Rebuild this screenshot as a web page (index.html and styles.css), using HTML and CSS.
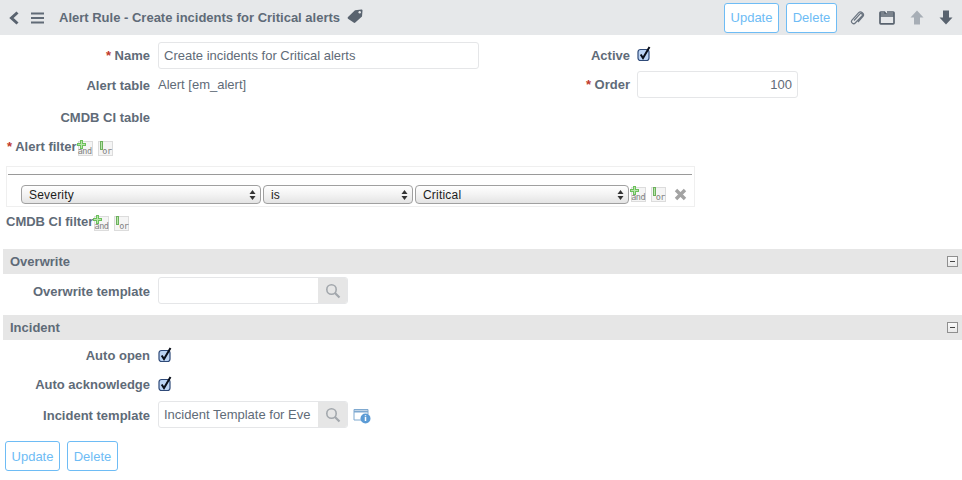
FILE: index.html
```html
<!DOCTYPE html>
<html lang="en">
<head>
<meta charset="utf-8">
<title>Alert Rule</title>
<link rel="stylesheet" href="styles.css">
</head>
<body>
<header class="topbar">
  <svg class="ic-back" width="12" height="14" viewBox="0 0 12 14"><path d="M9.500 1.500 3.500 7l6 5.500" fill="none" stroke="#59636f" stroke-width="3"/></svg>
  <svg class="ic-menu" width="14" height="12" viewBox="0 0 14 12"><path d="M0 1.500h13M0 6h13M0 10.500h13" stroke="#616b77" stroke-width="2"/></svg>
  <h1 class="title">Alert Rule - Create incidents for Critical alerts</h1>
  <svg class="ic-tag" width="16" height="14" viewBox="0 0 16 14"><path d="M1 8 8 1.200 14.300 .5c.8 0 1.300.5 1.200 1.300L15 7.500 8.300 13.500c-.5.500-1.200.5-1.700 0L1 9.700c-.5-.5-.5-1.200 0-1.700Z" fill="#59636f"/><circle cx="12.700" cy="3.300" r="1.200" fill="#e6e8ea"/></svg>
  <div class="top-actions">
    <button class="btn btn-update">Update</button>
    <button class="btn btn-delete">Delete</button>
    <svg class="ic-clip" width="16" height="16" viewBox="0 0 16 16"><path d="M5 10.500 11 3.800c1-1.100 3.100.6 2 2L6.200 13c-1.700 1.900-5 -.7-3.200-2.900L9.700 2.700c2-2.200 6.300 1 4.300 3.700L9 12" fill="none" stroke="#6a7480" stroke-width="1.200"/></svg>
    <svg class="ic-folder" width="16" height="14" viewBox="0 0 16 14"><path d="M1 12V3h14v9c0 .5-.3.8-.8.8H1.800C1.300 12.800 1 12.500 1 12ZM1 5h14M1 3V1.800C1 1.300 1.300 1 1.800 1h3.700L7 3M8 1h6.200c.5 0 .8.3.8.8V3" fill="none" stroke="#59636f" stroke-width="1.700"/></svg>
    <svg class="ic-up" width="14" height="15" viewBox="0 0 14 15"><path d="M7 .5 13.500 7.500H10V14.500H4V7.500H.5Z" fill="#a7aeb6"/></svg>
    <svg class="ic-down" width="14" height="15" viewBox="0 0 14 15"><path d="M7 14.500 13.500 7.500H10V.5H4V7.500H.5Z" fill="#59636f"/></svg>
  </div>
</header>

<main>
  <div class="top-form">
    <div class="col-left">
      <div class="row row-name">
        <label class="lab"><span class="req">*</span> Name</label>
        <div class="input input-name">Create incidents for Critical alerts</div>
      </div>
      <div class="row row-table">
        <label class="lab">Alert table</label>
        <span class="value">Alert [em_alert]</span>
      </div>
      <div class="row row-cmdb">
        <label class="lab">CMDB CI table</label>
      </div>
    </div>
    <div class="col-right">
      <div class="row row-active">
        <label class="lab lab-right">Active</label>
        <svg class="check" width="15" height="16" viewBox="0 0 15 16"><rect x="1" y="3.500" width="11" height="11" rx="2.500" fill="#bcd4f4" stroke="#2f4a78" stroke-width="1.200"/><path d="M3.700 8.500 6 12 12.500 1" fill="none" stroke="#0a0f1a" stroke-width="2"/></svg>
      </div>
      <div class="row row-order">
        <label class="lab lab-right"><span class="req">*</span> Order</label>
        <div class="input input-order">100</div>
      </div>
    </div>
  </div>

  <div class="filter-head alert-head">
    <label class="lab-inline"><span class="req">*</span> Alert filter</label>
    <span class="cond cond-and"><i class="plus"></i><b>and</b></span>
    <span class="cond cond-or"><i class="bar"></i><b>or</b></span>
  </div>

  <div class="filter-box">
    <div class="filter-line"></div>
    <div class="filter-row">
      <div class="select sel-1">Severity<svg width="7" height="10" viewBox="0 0 7 10"><path d="M3.500 0 6.500 4H.5ZM3.500 10 .5 6h6Z" fill="#333"/></svg></div>
      <div class="select sel-2">is<svg width="7" height="10" viewBox="0 0 7 10"><path d="M3.500 0 6.500 4H.5ZM3.500 10 .5 6h6Z" fill="#333"/></svg></div>
      <div class="select sel-3">Critical<svg width="7" height="10" viewBox="0 0 7 10"><path d="M3.500 0 6.500 4H.5ZM3.500 10 .5 6h6Z" fill="#333"/></svg></div>
      <span class="cond cond-and row-and"><i class="plus"></i><b>and</b></span>
      <span class="cond cond-or row-or"><i class="bar"></i><b>or</b></span>
      <svg class="ic-x" width="13" height="13" viewBox="0 0 13 13"><path d="M2 2 11 11M11 2 2 11" stroke="#a3a3a3" stroke-width="3.400"/></svg>
    </div>
  </div>

  <div class="filter-head cmdb-head">
    <label class="lab-inline">CMDB CI filter</label>
    <span class="cond cond-and"><i class="plus"></i><b>and</b></span>
    <span class="cond cond-or"><i class="bar"></i><b>or</b></span>
  </div>

  <section class="band band-overwrite"><h2>Overwrite</h2><span class="collapse"><i></i></span></section>
  <div class="row row-template">
    <label class="lab">Overwrite template</label>
    <div class="lookup">
      <div class="lookup-text"></div>
      <div class="lookup-btn"><svg width="16" height="16" viewBox="0 0 16 16"><circle cx="6.500" cy="6.500" r="4.700" fill="none" stroke="#a3a8ad" stroke-width="1.600"/><path d="M10 10l4.500 4.500" stroke="#a3a8ad" stroke-width="2.200"/></svg></div>
    </div>
  </div>

  <section class="band band-incident"><h2>Incident</h2><span class="collapse"><i></i></span></section>
  <div class="row row-open">
    <label class="lab">Auto open</label>
    <svg class="check" width="15" height="16" viewBox="0 0 15 16"><rect x="1" y="3.500" width="11" height="11" rx="2.500" fill="#bcd4f4" stroke="#2f4a78" stroke-width="1.200"/><path d="M3.700 8.500 6 12 12.500 1" fill="none" stroke="#0a0f1a" stroke-width="2"/></svg>
  </div>
  <div class="row row-ack">
    <label class="lab">Auto acknowledge</label>
    <svg class="check" width="15" height="16" viewBox="0 0 15 16"><rect x="1" y="3.500" width="11" height="11" rx="2.500" fill="#bcd4f4" stroke="#2f4a78" stroke-width="1.200"/><path d="M3.700 8.500 6 12 12.500 1" fill="none" stroke="#0a0f1a" stroke-width="2"/></svg>
  </div>
  <div class="row row-incident">
    <label class="lab">Incident template</label>
    <div class="lookup">
      <div class="lookup-text">Incident Template for Eve</div>
      <div class="lookup-btn"><svg width="16" height="16" viewBox="0 0 16 16"><circle cx="6.500" cy="6.500" r="4.700" fill="none" stroke="#a3a8ad" stroke-width="1.600"/><path d="M10 10l4.500 4.500" stroke="#a3a8ad" stroke-width="2.200"/></svg></div>
    </div>
    <svg class="ic-info" width="18" height="16" viewBox="0 0 18 16"><path d="M1 1.500h14v5M1 1.500v10.500h8" fill="none" stroke="#7fa9d0" stroke-width="1"/><path d="M1 3.500h14" stroke="#7fa9d0" stroke-width="2"/><circle cx="12.500" cy="10.500" r="5" fill="#5b9bd5"/><path d="M12.500 9v4M12.500 7.300v1" stroke="#fff" stroke-width="1.500"/></svg>
  </div>
  <div class="bottom-actions">
    <button class="btn btn-update">Update</button>
    <button class="btn btn-delete">Delete</button>
  </div>
</main>
</body>
</html>
```
FILE: styles.css
```css
* { box-sizing: border-box; }
html, body { margin: 0; padding: 0; }
body {
  width: 962px;
  height: 480px;
  overflow: hidden;
  background: #fff;
  font-family: "Liberation Sans", Arial, sans-serif;
  font-size: 13px;
  color: #5f6b78;
}

/* header */
.topbar {
  display: flex;
  align-items: center;
  height: 35px;
  background: #e6e8ea;
  padding-left: 8px;
}
.ic-menu { margin-left: 11px; }
.title {
  margin: 0 0 0 14px;
  font-size: 13px;
  font-weight: 700;
  color: #5f6b78;
  white-space: nowrap;
}
.ic-tag { margin: -3px 0 0 7px; }
.top-actions {
  display: flex;
  align-items: center;
  margin-left: auto;
  padding-right: 9px;
}
.btn {
  display: block;
  height: 30px;
  padding: 0;
  background: #fff;
  border: 1px solid #6ebcf5;
  border-radius: 3px;
  font: 13px "Liberation Sans", Arial, sans-serif;
  color: #6ebcf5;
}
.btn-update { width: 55px; }
.btn-delete { width: 51px; margin-left: 7px; }
.ic-clip { margin-left: 12px; }
.ic-folder { margin-left: 14px; }
.ic-up { margin-left: 15px; }
.ic-down { margin-left: 15px; }

/* rows */
.row { display: flex; align-items: flex-start; }
.lab {
  flex: none;
  width: 150px;
  text-align: right;
  font-weight: 700;
  color: #5f6b78;
  margin-right: 8px;
  line-height: 16px;
}
.req { color: #c0392b; }
.input, .lookup {
  border: 1px solid #e5e6e8;
  border-radius: 3px;
  background: #fff;
  height: 27px;
  line-height: 25px;
}
.input { padding: 0 5px; color: #5f6b78; }

.top-form { display: flex; padding-top: 7px; }
.col-left { width: 584px; }
.col-right { flex: 1; }
.input-name { width: 321px; }
.row-name .lab { padding-top: 6px; }
.row-table { margin-top: 9px; height: 16px; }
.value { line-height: 16px; margin-top: -1px; }
.row-cmdb { margin-top: 16px; }

.lab-right { width: 46px; margin-right: 7px; white-space: nowrap; }
.row-active { height: 29px; padding-top: 6px; }
.row-active .check { margin-top: -2px; }
.row-order .lab { padding-top: 6px; }
.input-order { width: 161px; text-align: right; padding-right: 5px; }

/* filter */
.filter-head { display: flex; align-items: flex-start; }
.filter-head .cond { margin-top: 2px; }
.alert-head { padding-left: 7px; margin-top: 13px; height: 27px; }
.cmdb-head { padding-left: 6px; margin-top: 7px; height: 35px; }
.lab-inline {
  font-weight: 700;
  color: #5f6b78;
  line-height: 16px;
  white-space: nowrap;
}
.cond {
  position: relative;
  display: block;
  flex: none;
  width: 15px;
  height: 15px;
  background: #f5f5f5;
  border: 1px solid #dcdcdc;
}
.cond b {
  position: absolute;
  right: 0;
  bottom: -1px;
  font: 400 8.500px/9px "DejaVu Sans Mono", monospace;
  letter-spacing: -.5px;
  color: #808080;
}
.cond-and { margin-left: 1px; }
.cond-or { margin-left: 5px; }
.plus {
  position: absolute;
  left: -2px;
  top: -2px;
  width: 9px;
  height: 9px;
  z-index: 1;
  background:
    linear-gradient(#b9e6ab, #b9e6ab) 4px 1px / 1px 7px no-repeat,
    linear-gradient(#b9e6ab, #b9e6ab) 1px 4px / 7px 1px no-repeat,
    linear-gradient(#6cc05c, #6cc05c) 3px 0 / 3px 9px no-repeat,
    linear-gradient(#6cc05c, #6cc05c) 0 3px / 9px 3px no-repeat;
}
.bar {
  position: absolute;
  left: 1px;
  top: -1px;
  width: 3px;
  height: 9px;
  background: #b9e6ab;
  border: 1px solid #6cb05c;
}

.filter-box {
  margin-left: 6px;
  width: 689px;
  height: 41px;
  border: 1px solid #efefef;
}
.filter-line { margin: 7px 2px 0 1px; height: 1px; background: #9a9a9a; }
.filter-row { display: flex; align-items: center; margin-top: 10px; padding-left: 14px; }
.select {
  display: flex;
  align-items: center;
  justify-content: space-between;
  height: 19px;
  padding: 0 4px 0 7px;
  margin-right: 2px;
  border: 1px solid #a0a0a0;
  border-radius: 4px;
  background: linear-gradient(#fff, #f3f3f3 50%, #e4e4e4);
  color: #1c1c1c;
  font-size: 12px;
  letter-spacing: .2px;
}
.sel-1 { width: 240px; }
.sel-2 { width: 150px; }
.sel-3 { width: 214px; margin-right: 0; }
.row-and { margin-left: 2px; }
.ic-x { margin-left: 8px; }

/* bands */
.band {
  display: flex;
  align-items: center;
  justify-content: space-between;
  margin-left: 3px;
  height: 25px;
  background: #e6e6e6;
  padding: 0 4px 0 7px;
}
.band h2 { margin: 0; font-size: 13px; font-weight: 700; color: #5f6b78; }
.collapse {
  display: flex;
  align-items: center;
  justify-content: center;
  width: 11px;
  height: 11px;
  background: linear-gradient(#fafafa, #e9e9e9);
  border: 1px solid #8f8f8f;
}
.collapse i { display: block; width: 5px; height: 1px; background: #444; }

.row-template { margin-top: 3px; height: 38px; }
.row-template .lab, .row-incident .lab { padding-top: 7px; }
.lookup {
  display: flex;
  width: 190px;
  overflow: hidden;
}
.lookup-text { width: 159px; padding-left: 5px; white-space: nowrap; overflow: hidden; }
.lookup-btn {
  display: flex;
  align-items: center;
  justify-content: center;
  width: 29px;
  background: #e6e6e6;
}
.row-open { margin-top: 8px; height: 29px; }
.row-open .check, .row-ack .check { margin-top: -1px; }
.row-ack { height: 24px; }
.row-incident { height: 27px; }
.ic-info { margin: 7px 0 0 5px; }
.bottom-actions { display: flex; margin: 13px 0 0 5px; }
```
